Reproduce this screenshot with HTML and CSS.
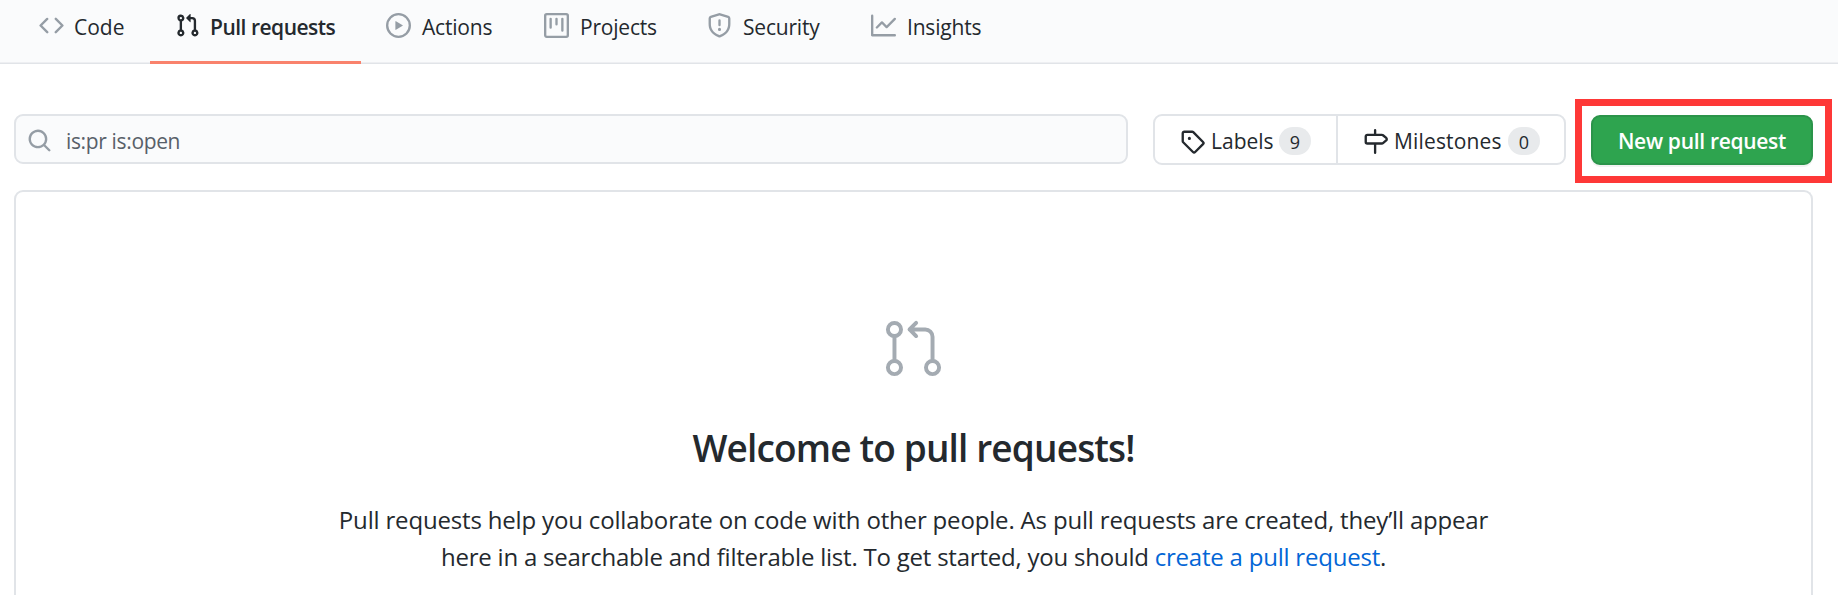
FILE: index.html
```
<!DOCTYPE html>
<html lang="en">
<head>
<meta charset="utf-8">
<title>Pull requests</title>
<link rel="stylesheet" href="styles.css">
</head>
<body>
<nav class="nav">
  <a class="tab code"><svg class="icon" viewBox="0 0 16 16"><path d="M4.72 3.22a.75.75 0 011.06 1.06L2.06 8l3.72 3.72a.75.75 0 11-1.06 1.06L.47 8.53a.75.75 0 010-1.06l4.25-4.25zm6.56 0a.75.75 0 10-1.06 1.06L13.94 8l-3.72 3.72a.75.75 0 101.06 1.06l4.25-4.25a.75.75 0 000-1.06l-4.25-4.25z"/></svg><span>Code</span></a>
  <a class="tab pulls selected"><svg class="icon" viewBox="0 0 16 16"><path fill-rule="evenodd" d="M7.177 3.073L9.573.677A.25.25 0 0110 .854v4.792a.25.25 0 01-.427.177L7.177 3.427a.25.25 0 010-.354zM3.75 2.5a.75.75 0 100 1.5.75.75 0 000-1.5zm-2.25.75a2.25 2.25 0 113 2.122v5.256a2.251 2.251 0 11-1.5 0V5.372A2.25 2.25 0 011.5 3.25zM11 2.5h-1V4h1a1 1 0 011 1v5.628a2.251 2.251 0 101.5 0V5A2.5 2.5 0 0011 2.5zm1 10.25a.75.75 0 111.5 0 .75.75 0 01-1.5 0zM3.75 12a.75.75 0 100 1.5.75.75 0 000-1.5z"/></svg><span>Pull requests</span></a>
  <a class="tab actions"><svg class="icon" viewBox="0 0 16 16"><path fill-rule="evenodd" d="M1.5 8a6.5 6.5 0 1113 0 6.5 6.5 0 01-13 0zM8 0a8 8 0 100 16A8 8 0 008 0zM6.379 5.227A.25.25 0 006 5.442v5.117a.25.25 0 00.379.214l4.264-2.559a.25.25 0 000-.428L6.379 5.227z"/></svg><span>Actions</span></a>
  <a class="tab projects"><svg class="icon" viewBox="0 0 16 16"><path fill-rule="evenodd" d="M1.75 0A1.75 1.75 0 000 1.75v12.5C0 15.216.784 16 1.75 16h12.5A1.75 1.75 0 0016 14.25V1.75A1.75 1.75 0 0014.25 0H1.75zM1.5 1.75a.25.25 0 01.25-.25h12.5a.25.25 0 01.25.25v12.5a.25.25 0 01-.25.25H1.75a.25.25 0 01-.25-.25V1.75zM11.75 3a.75.75 0 00-.75.75v7.5a.75.75 0 001.5 0v-7.5a.75.75 0 00-.75-.75zm-8.25.75a.75.75 0 011.5 0v5.5a.75.75 0 01-1.5 0v-5.5zM8 3a.75.75 0 00-.75.75v3.5a.75.75 0 001.5 0v-3.5A.75.75 0 008 3z"/></svg><span>Projects</span></a>
  <a class="tab security"><svg class="icon" viewBox="0 0 16 16"><path fill-rule="evenodd" d="M7.467.133a1.75 1.75 0 011.066 0l5.25 1.68A1.75 1.75 0 0115 3.48V7c0 1.566-.32 3.182-1.303 4.682-.983 1.498-2.585 2.813-5.032 3.855a1.7 1.7 0 01-1.33 0c-2.447-1.042-4.049-2.357-5.032-3.855C1.32 10.182 1 8.566 1 7V3.48a1.75 1.75 0 011.217-1.667l5.25-1.68zm.61 1.429a.25.25 0 00-.153 0l-5.25 1.68a.25.25 0 00-.174.238V7c0 1.358.275 2.666 1.057 3.86.784 1.194 2.121 2.34 4.366 3.297a.2.2 0 00.154 0c2.245-.956 3.582-2.104 4.366-3.298C13.225 9.666 13.5 8.36 13.5 7V3.48a.25.25 0 00-.174-.237l-5.25-1.68zM9 10.5a1 1 0 11-2 0 1 1 0 012 0zm-.25-5.75a.75.75 0 10-1.5 0v3a.75.75 0 001.5 0v-3z"/></svg><span>Security</span></a>
  <a class="tab insights"><svg class="icon" viewBox="0 0 16 16"><path fill-rule="evenodd" d="M1.5 1.75a.75.75 0 00-1.5 0v12.5c0 .414.336.75.75.75h14.5a.75.75 0 000-1.5H1.5V1.75zm14.28 2.53a.75.75 0 00-1.06-1.06L10 7.94 7.53 5.47a.75.75 0 00-1.06 0L3.22 8.72a.75.75 0 001.06 1.06L7 7.06l2.47 2.47a.75.75 0 001.06 0l5.25-5.25z"/></svg><span>Insights</span></a>
</nav>
<main class="page">
  <div class="toolbar">
    <div class="search"><svg class="icon" viewBox="0 0 16 16"><path fill-rule="evenodd" d="M11.5 7a4.499 4.499 0 11-8.998 0A4.499 4.499 0 0111.5 7zm-.82 4.74a6 6 0 111.06-1.06l3.04 3.04a.75.75 0 11-1.06 1.06l-3.04-3.04z"/></svg><span>is:pr is:open</span></div>
    <div class="group">
      <a class="btn labels"><svg class="icon" viewBox="0 0 16 16"><path fill-rule="evenodd" d="M2.5 7.775V2.75a.25.25 0 01.25-.25h5.025a.25.25 0 01.177.073l6.25 6.25a.25.25 0 010 .354l-5.025 5.025a.25.25 0 01-.354 0l-6.25-6.25a.25.25 0 01-.073-.177zm-1.5 0V2.75C1 1.784 1.784 1 2.75 1h5.025c.464 0 .91.184 1.238.513l6.25 6.25a1.75 1.75 0 010 2.474l-5.026 5.026a1.75 1.75 0 01-2.474 0l-6.25-6.25A1.75 1.75 0 011 7.775zM6 5a1 1 0 100 2 1 1 0 000-2z"/></svg><span class="name">Labels</span><span class="count">9</span></a>
      <a class="btn milestones"><svg class="icon" viewBox="0 0 16 16"><path fill-rule="evenodd" d="M7.75 0a.75.75 0 01.75.75V3h3.634c.414 0 .814.147 1.13.414l2.07 1.75a1.75 1.75 0 010 2.672l-2.07 1.75a1.75 1.75 0 01-1.13.414H8.5v5.25a.75.75 0 11-1.5 0V10H2.75A1.75 1.75 0 011 8.25v-3.5C1 3.784 1.784 3 2.75 3H7V.75A.75.75 0 017.75 0zm0 8.5h4.384a.25.25 0 00.161-.06l2.07-1.75a.25.25 0 000-.38l-2.07-1.75a.25.25 0 00-.161-.06H2.75a.25.25 0 00-.25.25v3.5c0 .138.112.25.25.25h5z"/></svg><span class="name">Milestones</span><span class="count">0</span></a>
    </div>
    <div class="new-wrap"><a class="new"><span>New pull request</span></a><div class="marker"></div></div>
  </div>
  <section class="blank">
    <svg class="hero" viewBox="0 0 24 24"><circle cx="4.75" cy="4.75" r="2.5"/><circle cx="4.75" cy="19.25" r="2.5"/><circle cx="19.25" cy="19.25" r="2.5"/><path d="M4.75 7.5v9M13 2.25l-2.5 2.5 2.5 2.5M10.5 4.75H16.5a2.75 2.75 0 0 1 2.75 2.75v9"/></svg>
    <h1 class="title"><span>Welcome to pull requests!</span></h1>
    <p class="text"><span class="line one">Pull requests help you collaborate on code with other people. As pull requests are created, they’ll appear</span><span class="line two">here in a searchable and filterable list. To get started, you should <a class="link">create a pull request</a>.</span></p>
  </section>
</main>
</body>
</html>
```
FILE: styles.css
```
* { box-sizing: border-box; }
html { background: #fff; }
body {
  margin: 0;
  height: 595px;
  overflow: hidden;
  color: #24292e;
  font-family: "Open Sans", "Noto Sans", sans-serif;
  font-size: 21px;
}
.icon { display: block; flex: none; width: 25px; height: 25px; fill: #959da5; }

.nav {
  display: flex;
  height: 64px;
  background: #fafbfc;
  box-shadow: inset 0 -1.5px #e1e4e8;
}
.tab { display: flex; flex: none; height: 64px; padding: 13px 0 0 25px; white-space: nowrap; }
.tab span { line-height: 28px; letter-spacing: -0.2px; }
.code { width: 136px; margin-left: 14px; }
.code span { margin-left: 10px; letter-spacing: 0; }
.pulls { width: 211px; }
.selected { border-bottom: 3px solid #f9826c; font-weight: 600; }
.selected .icon { fill: #24292e; }
.pulls span { margin-left: 10px; letter-spacing: -0.5px; }
.actions { width: 158px; }
.projects { width: 163px; }
.security { width: 164px; }
.actions span, .projects span, .security span, .insights span { margin-left: 11px; }

.page { padding: 50px 25px 0 14px; }
.toolbar { display: flex; height: 51px; }
.search {
  display: flex;
  width: 1114px;
  height: 50px;
  padding: 12px 0 0 11px;
  border: 2px solid #e1e4e8;
  border-radius: 9px;
  background: #fafbfc;
  color: #586069;
}
.search span { margin-left: 14px; line-height: 26px; letter-spacing: -0.35px; }
.group {
  display: flex;
  width: 413px;
  height: 51px;
  margin-left: 25px;
  border: 2px solid #e1e4e8;
  border-radius: 9px;
  background: #fff;
}
.btn { display: flex; padding: 13px 0 0 25px; white-space: nowrap; font-weight: 500; }
.btn .icon { fill: #24292e; }
.labels { width: 183px; border-right: 2px solid #e1e4e8; }
.name { line-height: 24px; }
.labels .name { width: 68px; margin-left: 6px; }
.milestones .name { width: 114px; margin-left: 6px; letter-spacing: 0.15px; }
.count {
  width: 32px;
  height: 28px;
  margin-top: -2px;
  border-radius: 14px;
  background: #e8eaec;
  font-size: 18px;
  line-height: 30px;
  text-align: center;
}
.new-wrap { position: relative; margin: 1px 0 0 25px; }
.new {
  display: block;
  width: 222px;
  height: 50px;
  border: 2px solid #2b944a;
  border-radius: 9px;
  background: #2ea44f;
  box-shadow: 0 2px 0 rgba(27, 31, 35, 0.06);
  color: #fff;
  font-weight: 600;
  letter-spacing: -0.3px;
  line-height: 49px;
  text-align: center;
  white-space: nowrap;
}
.marker { position: absolute; left: -16px; top: -16px; width: 257px; height: 84px; border: 7px solid #fe3837; }

.blank {
  display: flex;
  flex-direction: column;
  align-items: center;
  height: 405px;
  margin-top: 25px;
  padding-top: 125px;
  border: 2px solid #e1e4e8;
  border-bottom: 0;
  border-radius: 9px 9px 0 0;
}
.hero { display: block; width: 63px; height: 63px; margin-top: -0.5px; fill: none; stroke: #a4abb2; stroke-width: 1.5; stroke-linecap: round; stroke-linejoin: round; }
.title { margin: 43.5px 0 0; font-size: 37px; font-weight: 600; letter-spacing: -0.85px; line-height: 50px; white-space: nowrap; }
.text { display: flex; flex-direction: column; align-items: center; margin: 28px 0 0; font-size: 24px; line-height: 37px; }
.line { white-space: nowrap; }
.one { letter-spacing: -0.17px; }
.two { letter-spacing: -0.22px; }
.link { color: #0366d6; }
```
